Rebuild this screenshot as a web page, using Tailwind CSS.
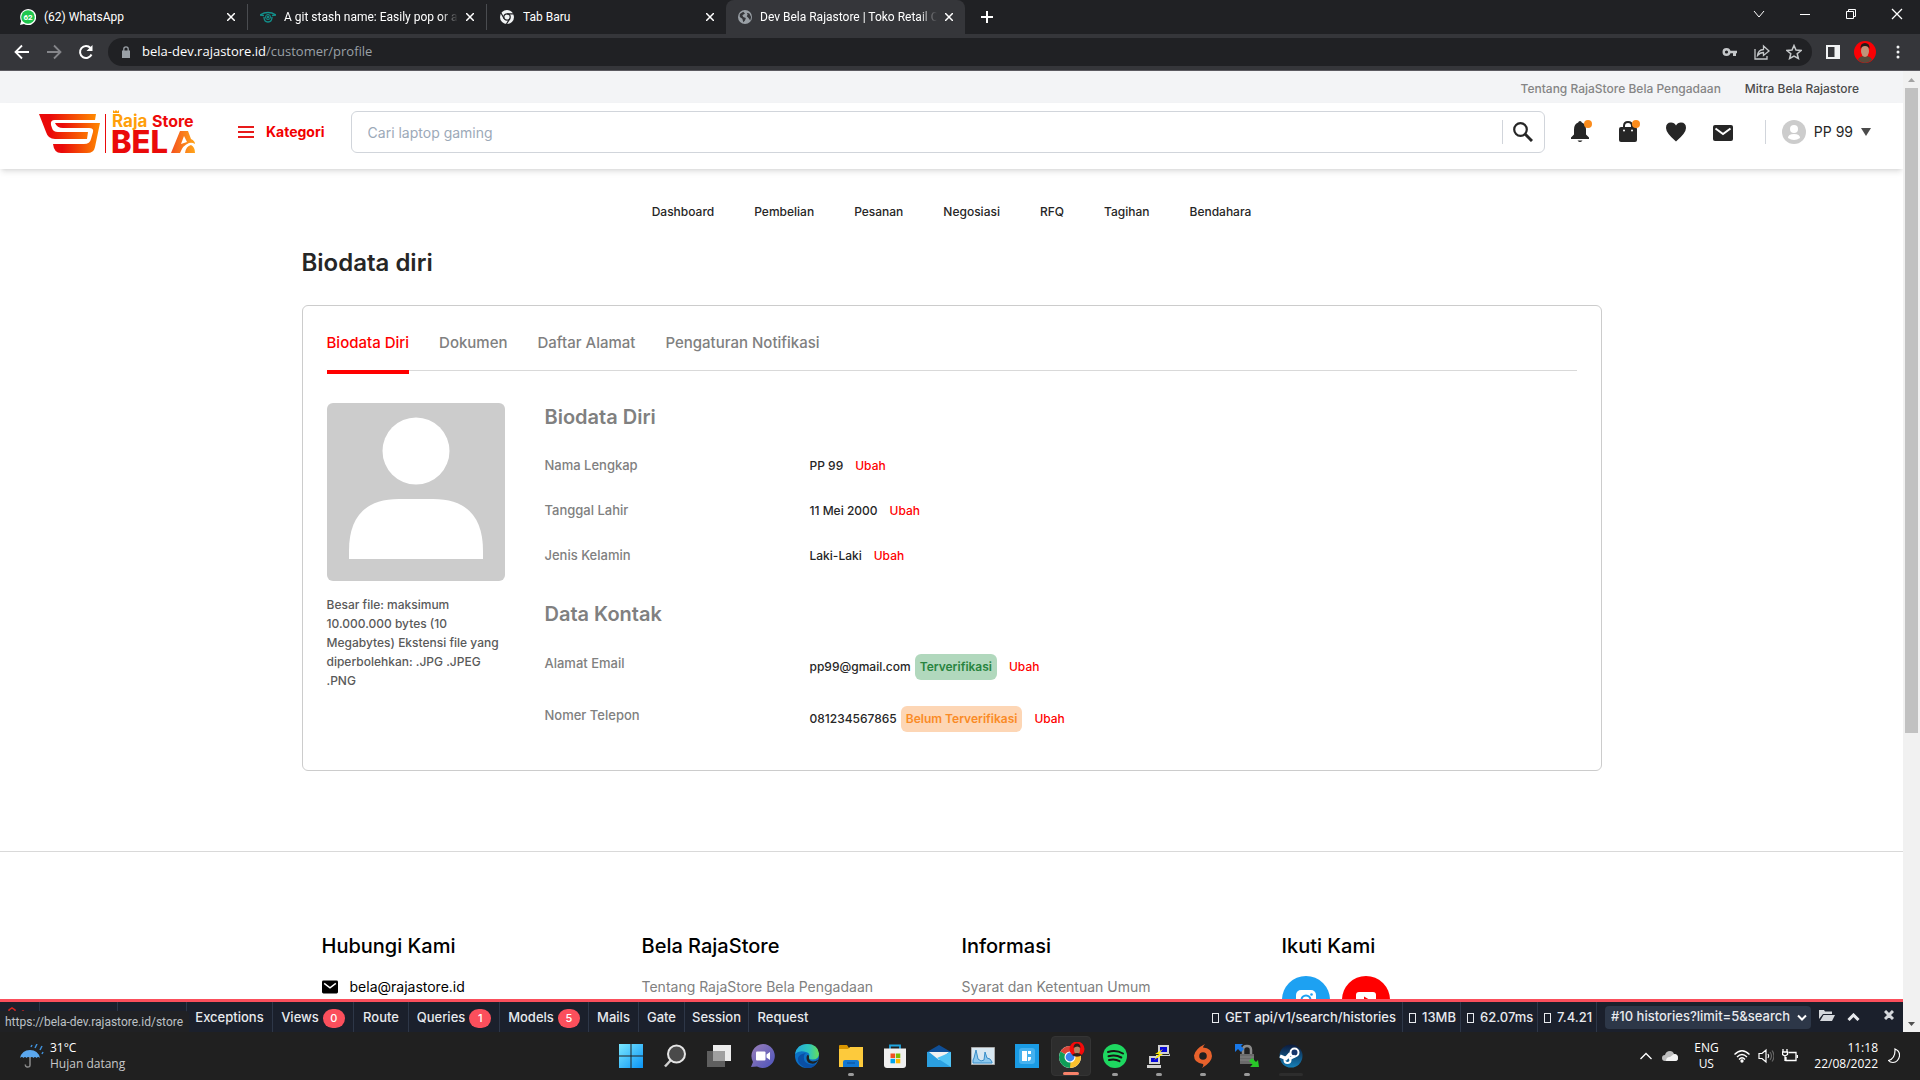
<!DOCTYPE html>
<html lang="id">
<head>
    <meta charset="UTF-8">
    <meta name="viewport" content="width=device-width, initial-scale=1.0">
    <title>Dev Bela Rajastore | Toko Retail Online</title>
    <script src="https://cdn.jsdelivr.net/npm/@tailwindcss/browser@4"></script>
</head>
<body class="h-screen flex flex-col overflow-hidden bg-white font-['Inter','Liberation_Sans',sans-serif] text-[#262626]">

    <!-- Browser: tab -->
    <div class="h-[34px] shrink-0 bg-[#202124] flex items-stretch text-white text-xs font-['Roboto','Open_Sans',sans-serif]">
        <div class="w-[248px] flex items-center pl-5 pr-2 my-1 border-r border-[#4a4c50]">
            <svg class="w-4 h-4 mr-2 shrink-0" viewBox="0 0 16 16"><path d="M0 16l1.200-4A8 8 0 1 1 4 14.900z" fill="#fff"/><circle cx="8" cy="8" r="6.800" fill="#1fc64d"/><text x="8" y="11" font-size="8" font-weight="700" text-anchor="middle" fill="#fff">62</text></svg>
            <span class="flex-1 whitespace-nowrap overflow-hidden">(62) WhatsApp</span>
            <button aria-label="Tutup tab" class="w-4 h-4 flex items-center justify-center"><svg class="w-2 h-2" viewBox="0 0 8 8" stroke="#fff" stroke-width="1.500"><path d="M0 0l8 8M8 0l-8 8"/></svg></button>
        </div>
        <div class="w-[239px] flex items-center pl-3 pr-2 my-1 border-r border-[#4a4c50]">
            <svg class="w-4 h-4 mr-2 shrink-0" viewBox="0 0 16 16" fill="none" stroke="#12918c"><path d="M0 6q8-5 16 0l-4 .5M0 6l4 .5M4 8q0 5 4 5t4-5" stroke-width="1.300"/><circle cx="8" cy="8" r="2.500"/><circle cx="8" cy="8" r="1" fill="#12918c"/></svg>
            <span class="flex-1 whitespace-nowrap overflow-hidden mask-r-from-90%">A git stash name: Easily pop or apply</span>
            <button aria-label="Tutup tab" class="w-4 h-4 ml-1 flex items-center justify-center"><svg class="w-2 h-2" viewBox="0 0 8 8" stroke="#fff" stroke-width="1.500"><path d="M0 0l8 8M8 0l-8 8"/></svg></button>
        </div>
        <div class="w-[239px] flex items-center pl-3 pr-2 my-1">
            <svg class="w-4 h-4 mr-2 shrink-0" viewBox="0 0 16 16"><circle cx="8" cy="8" r="7" fill="#f1f3f4"/><circle cx="8" cy="8" r="3.200" fill="#f1f3f4" stroke="#202124" stroke-width="1.200"/><path d="M8 4.800h7M5.200 9.600L2 4M10.800 9.600L7.500 15" stroke="#202124" stroke-width="1.200"/></svg>
            <span class="flex-1 whitespace-nowrap overflow-hidden">Tab Baru</span>
            <button aria-label="Tutup tab" class="w-4 h-4 flex items-center justify-center"><svg class="w-2 h-2" viewBox="0 0 8 8" stroke="#fff" stroke-width="1.500"><path d="M0 0l8 8M8 0l-8 8"/></svg></button>
        </div>
        <div class="w-[239px] flex items-center pl-3 pr-2 bg-[#35363a] rounded-t-lg">
            <svg class="w-[14px] h-[14px] mr-2 shrink-0" viewBox="0 0 16 16"><circle cx="8" cy="8" r="8" fill="#9aa0a6"/><path d="M2 4.500l4-2.500 2 2-3 2 1 2 3 1-1 3-2 2-1-4-3-2zM10 3l3 1 2 4-1 4-2-3-2-2 1-2z" fill="#35363a"/></svg>
            <span class="flex-1 whitespace-nowrap overflow-hidden mask-r-from-90%">Dev Bela Rajastore | Toko Retail Online</span>
            <button aria-label="Tutup tab" class="w-4 h-4 ml-1 flex items-center justify-center"><svg class="w-2 h-2" viewBox="0 0 8 8" stroke="#fff" stroke-width="1.500"><path d="M0 0l8 8M8 0l-8 8"/></svg></button>
        </div>
        <button aria-label="Tab baru" class="w-11 flex items-center justify-center"><svg class="w-3 h-3" viewBox="0 0 12 12" stroke="#fff" stroke-width="2"><path d="M6 0v12M0 6h12"/></svg></button>
        <div class="ml-auto flex h-7 items-center">
            <button aria-label="Cari tab" class="w-[46px] flex justify-center"><svg class="w-3 h-3" viewBox="0 0 12 12" fill="none" stroke="#fff"><path d="M1 3l5 6 5-6"/></svg></button>
            <button aria-label="Minimalkan" class="w-[46px] flex justify-center"><svg class="w-[10px] h-3" viewBox="0 0 10 12" stroke="#fff"><path d="M0 6.500h10"/></svg></button>
            <button aria-label="Pulihkan" class="w-[46px] flex justify-center"><svg class="w-3 h-3" viewBox="0 0 12 12" fill="none" stroke="#fff"><path d="M1.500 3.500h7v7h-7zM3.500 3.500v-2h7v7h-2"/></svg></button>
            <button aria-label="Tutup" class="w-[46px] flex justify-center"><svg class="w-3 h-3" viewBox="0 0 12 12" stroke="#fff" stroke-width="1.300"><path d="M1 1l10 10M11 1L1 11"/></svg></button>
        </div>
    </div>

    <!-- Browser: toolbar -->
    <div class="h-[37px] shrink-0 bg-[#35363a] border-b border-[#5b5a60] flex items-center pl-[14px] pr-5 font-['Open_Sans','Noto_Sans',sans-serif]">
        <button aria-label="Kembali" class="w-8"><svg class="w-4 h-4" viewBox="0 0 16 16" fill="none" stroke="#fff" stroke-width="1.800"><path d="M15 8H2M8 1.500L1.500 8 8 14.500"/></svg></button>
        <button aria-label="Maju" class="w-8"><svg class="w-4 h-4" viewBox="0 0 16 16" fill="none" stroke="#85868a" stroke-width="1.800"><path d="M1 8h13M8 1.500L14.500 8 8 14.500"/></svg></button>
        <button aria-label="Muat ulang" class="w-[30px]"><svg class="w-4 h-4" viewBox="0 0 16 16" fill="none" stroke="#fff" stroke-width="2"><path d="M13.500 10.500A6 6 0 1 1 12.500 4"/><path d="M14.500 1v6h-6z" fill="#fff" stroke="none"/></svg></button>
        <div class="flex-1 h-7 rounded-full bg-[#202124] flex items-center pl-[14px] pr-[10px]">
            <svg class="w-2 h-3 mr-3" viewBox="0 0 8 12"><path d="M0 4.500h8V12H0z" fill="#9aa0a6"/><path d="M1.800 5V3a2.200 2.200 0 0 1 4.400 0v2" fill="none" stroke="#9aa0a6" stroke-width="1.300"/></svg>
            <span class="flex-1 text-[#9aa0a6] text-[13px]"><span class="text-white">bela-dev.rajastore.id</span>/customer/profile</span>
            <button aria-label="Kata sandi" class="mr-4"><svg class="w-4 h-4" viewBox="0 0 16 16"><circle cx="4.500" cy="8" r="2.800" fill="none" stroke="#c4c7c9" stroke-width="2.400"/><path d="M7 6.800h8v2.500h-1V12h-3V9.300H7z" fill="#c4c7c9"/></svg></button>
            <button aria-label="Bagikan" class="mr-4"><svg class="w-4 h-4" viewBox="0 0 16 16" fill="none" stroke="#c4c7c9" stroke-width="1.300"><path d="M1 5v10h12v-3M3.500 11.500Q4 6 9.500 5.500V2l5.500 5-5.500 4.500V8.500Q6 8.500 3.500 11.500z"/></svg></button>
            <button aria-label="Bookmark"><svg class="w-4 h-4" viewBox="0 0 16 16" fill="none" stroke="#c4c7c9" stroke-width="1.500"><path d="M8 1.500l2 4.500 5 .5-3.800 3.200 1.200 4.800L8 12l-4.400 2.500 1.200-4.800L1 6.500 6 6z"/></svg></button>
        </div>
        <button aria-label="Panel samping" class="ml-[14px] mr-[14px]"><svg class="w-[14px] h-[14px]" viewBox="0 0 14 14"><path d="M0 0h14v14H0z" fill="#f1f3f4"/><path d="M2 2h6.500v10H2z" fill="#35363a"/></svg></button>
        <button aria-label="Profil"><svg class="w-[22px] h-[22px]" viewBox="0 0 22 22"><circle cx="11" cy="11" r="11" fill="#fb0004"/><path d="M4 19q1-4 7-4t7 4q-7 6-14 0" fill="#5a4a3a"/><ellipse cx="11" cy="10" rx="4" ry="6" fill="#c0957a"/><path d="M6.500 8Q6 2 11 2t4.500 6q-1-3-4.500-3t-4.500 3" fill="#231a17"/></svg></button>
        <button aria-label="Menu" class="ml-5"><svg class="w-1 h-[14px]" viewBox="0 0 4 14" fill="#f1f3f4"><circle cx="2" cy="2" r="1.500"/><circle cx="2" cy="7" r="1.500"/><circle cx="2" cy="12" r="1.500"/></svg></button>
    </div>

    <main class="flex-1 min-h-0 flex relative">
        <div class="flex-1 min-w-0 flex flex-col">
            <div class="flex-1 min-h-0 overflow-hidden">
                <div class="h-8 pt-1 bg-[#f3f4f6] flex items-center justify-end gap-6 pr-11 text-xs font-medium">
                    <a href="#" class="text-[#858585]">Tentang RajaStore Bela Pengadaan</a>
                    <a href="#" class="text-[#4b4b4b]">Mitra Bela Rajastore</a>
                </div>

                <header class="h-[66px] bg-white shadow-md flex items-center pl-[39px] pr-8 pb-2">
                    <a href="#" aria-label="RajaStore Bela" class="mr-[43px]">
                        <svg class="w-[156px] h-11 overflow-visible" viewBox="0 0 156 44">
                            <defs><linearGradient id="cart" x1="0" x2="1"><stop offset=".2" stop-color="#ea0a0a"/><stop offset="1" stop-color="#ff8a00"/></linearGradient>
                            <linearGradient id="huruf" x1="0" x2="1"><stop offset="0" stop-color="#f4511e"/><stop offset="1" stop-color="#ffa51a"/></linearGradient></defs>
                            <path d="M0 4h57l-1 6H16q-5 0-4 5l1 3q1 4 6 4h30l-1 7H16q-7 0-9-7z" fill="url(#cart)"/>
                            <path d="M61 13l-5 24q-1 6-8 6H22q-7 0-8-9h31q6 0 7-5l2-7q1-4-4-4H24q-6 0-8-5z" fill="url(#cart)"/>
                            <path d="M66.500 4v39" stroke="#ea0a0a"/>
                            <text x="73" y="17" font-size="17" font-weight="700" fill="#ff9f0a">Raja</text>
                            <path d="M74 0l1.500 1.500L77 0l1.500 1.500L80 0v3h-6z" fill="#ff9f0a"/>
                            <text x="113" y="17" font-size="16" font-weight="700" fill="#ee0909">Store</text>
                            <text x="72" y="43" font-size="31" font-weight="800" fill="#ea0a0a">BEL</text>
                            <path d="M132 43l9-22h8l3 8q4 2 4 5-3-2-6-1-6 2-9 10h-7zM146 43q1-7 6-8 4 2 4 8z" fill="url(#huruf)"/>
                            <path d="M145 26l-3 8 6-2z" fill="#fff"/>
                        </svg>
                    </a>
                    <button class="flex items-center gap-3 text-[#f20000] text-sm font-bold mr-[26px]">
                        <svg class="w-4 h-3" viewBox="0 0 16 12" fill="#e81a1a"><path d="M0 0h16v2H0zM0 5h16v2H0zM0 10h16v2H0z"/></svg>
                        Kategori
                    </button>
                    <form class="flex-1 h-[42px] border border-[#d1d5db] rounded-md flex items-center">
                        <input type="text" aria-label="Cari" placeholder="Cari laptop gaming" class="flex-1 h-full px-4 text-sm outline-none placeholder:text-[#9ca9b8]">
                        <button type="button" aria-label="Cari" class="w-[42px] h-6 border-l border-[#d1d5db] flex items-center justify-center"><svg class="w-5 h-5" viewBox="0 0 20 20" fill="none" stroke="#262626"><circle cx="7.500" cy="7.500" r="6.300" stroke-width="2.200"/><path d="M12 12l7 7" stroke-width="3"/></svg></button>
                    </form>
                    <div class="flex items-center gap-[26px] ml-6 mr-8 text-[#262626]">
                        <a href="#" aria-label="Notifikasi" class="relative"><svg class="w-[22px] h-[22px]" viewBox="0 0 22 22" fill="currentColor"><path d="M11 0q1.500 0 1.800 1.500Q17 3 17 8.500v5l3 3V18H2v-1.500l3-3v-5Q5 3 9.200 1.500 9.500 0 11 0zM8.500 19.500h5q-2.500 3-5 0z"/></svg><span class="absolute -top-px -right-px w-2 h-2 rounded-full bg-[#fb8c1c]"></span></a>
                        <a href="#" aria-label="Keranjang" class="relative"><svg class="w-[22px] h-[22px]" viewBox="0 0 22 22"><path d="M4 6h14q2 0 2 2v11q0 2-2 2H4q-2 0-2-2V8q0-2 2-2z" fill="#262626"/><path d="M7 8V5q0-4 4-4t4 4v3" fill="none" stroke="#262626" stroke-width="2"/><circle cx="7" cy="9.500" r="1" fill="#fff"/><circle cx="15" cy="9.500" r="1" fill="#fff"/></svg><span class="absolute -top-px -right-px w-2 h-2 rounded-full bg-[#fb8c1c]"></span></a>
                        <a href="#" aria-label="Favorit"><svg class="w-[22px] h-[22px]" viewBox="0 0 22 22" fill="currentColor"><path d="M11 20.500Q1 12 1 7q0-5.500 5-5.500 3.500 0 5 3 1.500-3 5-3 5 0 5 5.500 0 5-10 13.500z"/></svg></a>
                        <a href="#" aria-label="Pesan"><svg class="w-5 h-[22px]" viewBox="0 0 20 22"><rect x="0" y="4" width="20" height="16" rx="2" fill="#262626"/><path d="M2.500 7.500L10 13l7.500-5.500" fill="none" stroke="#fff" stroke-width="2"/></svg></a>
                    </div>
                    <button class="h-6 border-l border-[#d1d5db] pl-4 flex items-center text-sm">
                        <svg class="w-6 h-6 mr-2" viewBox="0 0 24 24"><circle cx="12" cy="12" r="12" fill="#ccc"/><circle cx="12" cy="9" r="4" fill="#fff"/><path d="M6 18q0-4 6-4t6 4q-6 4-12 0z" fill="#fff"/></svg>
                        PP 99
                        <svg class="w-[10px] h-2 ml-2" viewBox="0 0 10 8"><path d="M0 0h10L5 8z" fill="#4b4b4b"/></svg>
                    </button>
                </header>

                <nav class="mt-[34px] flex justify-center gap-10 text-xs leading-[18px] font-medium">
                    <a href="#">Dashboard</a>
                    <a href="#">Pembelian</a>
                    <a href="#">Pesanan</a>
                    <a href="#">Negosiasi</a>
                    <a href="#">RFQ</a>
                    <a href="#">Tagihan</a>
                    <a href="#">Bendahara</a>
                </nav>

                <div class="max-w-[1300px] mx-auto">
                    <h1 class="mt-[26px] text-2xl leading-8 font-semibold">Biodata diri</h1>

                    <section class="mt-[26px] border border-[#ccc] rounded-md px-6 h-[466px]">
                        <div class="flex gap-[30px] border-b border-[#d9d9d9] text-[15px] leading-4 font-medium text-[#808080]">
                            <a href="#" class="pt-[29px] pb-[19px] -mb-1 border-b-4 border-[#f00] text-[#f00]">Biodata Diri</a>
                            <a href="#" class="pt-[29px]">Dokumen</a>
                            <a href="#" class="pt-[29px]">Daftar Alamat</a>
                            <a href="#" class="pt-[29px]">Pengaturan Notifikasi</a>
                        </div>

                        <div class="mt-8 flex">
                            <div class="w-[178px] mr-10">
                                <svg class="w-[178px] h-[178px] rounded-md bg-[#ccc]" viewBox="0 0 178 178" fill="#fff"><circle cx="89" cy="48" r="33.500"/><path d="M22 156v-8q0-52 50-52h34q50 0 50 52v8z"/></svg>
                                <p class="mt-[14px] text-xs leading-[19px] font-medium text-[#5a5a5a]">Besar file: maksimum 10.000.000 bytes (10 Megabytes) Ekstensi file yang diperbolehkan: .JPG .JPEG .PNG</p>
                            </div>

                            <div class="flex-1 text-xs font-medium">
                                <h2 class="text-xl leading-7 font-semibold text-[#808080]">Biodata Diri</h2>
                                <dl class="mt-[26px] grid grid-cols-[265px_1fr] gap-y-7 leading-[17px]">
                                    <dt class="text-[13px] text-[#808080]">Nama Lengkap</dt>
                                    <dd class="flex gap-3">PP 99 <a href="#" class="text-[#f00]">Ubah</a></dd>
                                    <dt class="text-[13px] text-[#808080]">Tanggal Lahir</dt>
                                    <dd class="flex gap-3">11 Mei 2000 <a href="#" class="text-[#f00]">Ubah</a></dd>
                                    <dt class="text-[13px] text-[#808080]">Jenis Kelamin</dt>
                                    <dd class="flex gap-3">Laki-Laki <a href="#" class="text-[#f00]">Ubah</a></dd>
                                </dl>

                                <h2 class="mt-9 text-xl leading-7 font-semibold text-[#808080]">Data Kontak</h2>
                                <dl class="mt-[26px] grid grid-cols-[265px_1fr] gap-y-[26px] leading-[18px]">
                                    <dt class="text-[13px] text-[#808080]">Alamat Email</dt>
                                    <dd class="flex items-center">pp99@gmail.com <span class="ml-1 px-[5px] py-1 rounded-md bg-[#b1d8bd] text-[#28843f] font-semibold">Terverifikasi</span> <a href="#" class="ml-3 text-[#f00]">Ubah</a></dd>
                                    <dt class="text-[13px] text-[#808080]">Nomer Telepon</dt>
                                    <dd class="flex items-center">081234567865 <span class="ml-1 px-[5px] py-1 rounded-md bg-[#fdd6b5] text-[#fa8b26] font-semibold">Belum Terverifikasi</span> <a href="#" class="ml-3 text-[#f00]">Ubah</a></dd>
                                </dl>
                            </div>
                        </div>
                    </section>
                </div>

                <footer class="mt-20 border-t border-[#d9d9d9] pt-20">
                    <div class="max-w-[1260px] mx-auto grid grid-cols-[320px_320px_320px_1fr] text-sm text-[#808080]">
                        <div>
                            <h3 class="text-xl leading-7 font-medium text-black">Hubungi Kami</h3>
                            <a href="#" class="mt-[15px] h-6 flex items-center gap-3 text-black"><svg class="w-4 h-4" viewBox="0 0 22 22"><rect x="0" y="2" width="22" height="18" rx="2"/><path d="M3 6l8 6 8-6" fill="none" stroke="#fff" stroke-width="2"/></svg>bela@rajastore.id</a>
                        </div>
                        <div>
                            <h3 class="text-xl leading-7 font-medium text-black">Bela RajaStore</h3>
                            <a href="#" class="mt-[15px] h-6 flex items-center">Tentang RajaStore Bela Pengadaan</a>
                        </div>
                        <div>
                            <h3 class="text-xl leading-7 font-medium text-black">Informasi</h3>
                            <a href="#" class="mt-[15px] h-6 flex items-center">Syarat dan Ketentuan Umum</a>
                        </div>
                        <div>
                            <h3 class="text-xl leading-7 font-medium text-black">Ikuti Kami</h3>
                            <div class="mt-4 flex gap-3">
                                <a href="#" aria-label="Instagram" class="w-12 h-12 rounded-full bg-[#1da1f2] flex items-center justify-center"><svg class="w-5 h-5" viewBox="0 0 20 20"><rect width="20" height="20" rx="5" fill="#fff"/><circle cx="10" cy="10" r="4.500" fill="none" stroke="#1da1f2" stroke-width="2"/><circle cx="15.500" cy="4.500" r="1.300" fill="#1da1f2"/></svg></a>
                                <a href="#" aria-label="YouTube" class="w-12 h-12 rounded-full bg-[#f00] flex items-center justify-center"><svg class="w-5 h-4" viewBox="0 0 20 16"><rect width="20" height="16" rx="3" fill="#fff"/><path d="M8 4.500l6 3.500-6 3.500z" fill="#f00"/></svg></a>
                            </div>
                        </div>
                    </div>
                </footer>
            </div>

            <!-- Debugbar -->
            <div class="h-[33px] shrink-0 border-t-3 border-[#fb4f5c] bg-[#1b202c] flex items-stretch text-[13px] font-medium text-[#e8eaee]">
                <div class="w-10 border-r border-[#2e3748] pl-2 pt-1"><svg class="w-5 h-5" viewBox="0 0 20 20" fill="none" stroke="#d0261f" stroke-width="1.500"><path d="M1 6V4l3-2 3 2v6l5 3V7l3-2 3 2v4l-6 4"/></svg></div>
                <div class="w-[78px] border-r border-[#2e3748]"></div>
                <div class="w-[69px] border-r border-[#2e3748]"></div>
                <button class="w-[86px] border-r border-[#2e3748] pt-[2px]">Exceptions</button>
                <button class="w-[81px] border-r border-[#2e3748] pt-[2px] flex items-center justify-center gap-1">Views <span class="w-[22px] h-[19px] rounded-full bg-[#fb4f5c] text-white text-[11px] leading-[19px]">0</span></button>
                <button class="w-[55px] border-r border-[#2e3748] pt-[2px]">Route</button>
                <button class="w-[91px] border-r border-[#2e3748] pt-[2px] flex items-center justify-center gap-1">Queries <span class="w-[22px] h-[19px] rounded-full bg-[#fb4f5c] text-white text-[11px] leading-[19px]">1</span></button>
                <button class="w-[89px] border-r border-[#2e3748] pt-[2px] flex items-center justify-center gap-1">Models <span class="w-[22px] h-[19px] rounded-full bg-[#fb4f5c] text-white text-[11px] leading-[19px]">5</span></button>
                <button class="w-[50px] border-r border-[#2e3748] pt-[2px]">Mails</button>
                <button class="w-[46px] border-r border-[#2e3748] pt-[2px]">Gate</button>
                <button class="w-[64px] border-r border-[#2e3748] pt-[2px]">Session</button>
                <button class="w-[68px] pt-[2px]">Request</button>
                <div class="ml-auto flex items-stretch">
                    <span class="flex items-center gap-[6px] px-[6px] pt-[2px] border-r border-[#2e3748]"><i class="w-[7px] h-[10px] border border-current"></i>GET api/v1/search/histories</span>
                    <span class="w-[58px] flex items-center gap-[6px] pl-[6px] pt-[2px] border-r border-[#2e3748]"><i class="w-[7px] h-[10px] border border-current"></i>13MB</span>
                    <span class="w-[77px] flex items-center gap-[6px] pl-[6px] pt-[2px] border-r border-[#2e3748]"><i class="w-[7px] h-[10px] border border-current"></i>62.07ms</span>
                    <span class="w-[59px] flex items-center gap-[6px] pl-[6px] pt-[2px] border-r border-[#2e3748]"><i class="w-[7px] h-[10px] border border-current"></i>7.4.21</span>
                    <div class="relative self-center ml-2">
                        <select aria-label="Riwayat permintaan" class="appearance-none w-[206px] h-[23px] rounded-sm bg-[#2d3748] pl-[6px] pr-4 outline-none"><option>#10 histories?limit=5&amp;search</option></select>
                        <svg class="absolute right-1 top-2 w-[10px] h-2" viewBox="0 0 10 8" fill="none" stroke="#fff" stroke-width="2"><path d="M1 1.500l4 4 4-4"/></svg>
                    </div>
                    <button aria-label="Buka" class="ml-2 mb-1"><svg class="w-4 h-3" viewBox="0 0 16 12" fill="#d5d8dc"><path d="M0 10V1h5l1 1.500h7V5H4zM1 12l3.500-6H16l-3 6z"/></svg></button>
                    <button aria-label="Perkecil" class="ml-3"><svg class="w-[13px] h-2" viewBox="0 0 13 8" fill="none" stroke="#e8eaee" stroke-width="3"><path d="M1.500 7l5-5 5 5"/></svg></button>
                    <button aria-label="Tutup debugbar" class="ml-6 mr-[9px] mb-1"><svg class="w-[10px] h-[10px]" viewBox="0 0 10 10" stroke="#d5d8dc" stroke-width="3"><path d="M1 1l8 8M9 1L1 9"/></svg></button>
                </div>
            </div>
        </div>

        <!-- Scrollbar -->
        <div class="w-[17px] bg-[#f1f1f1] flex flex-col items-center">
            <svg class="w-[17px] h-[17px] shrink-0" viewBox="0 0 17 17"><path d="M5 11h7L8.500 7z" fill="#a3a3a3"/></svg>
            <div class="w-[13px] h-[645px] bg-[#c1c1c1]"></div>
            <svg class="w-[17px] h-[17px] shrink-0 mt-auto" viewBox="0 0 17 17"><path d="M5 7h7l-3.500 4z" fill="#505050"/></svg>
        </div>

        <!-- Status URL -->
        <div class="absolute left-0 bottom-0 h-[21px] pl-[5px] pr-[6px] rounded-tr-sm bg-[#202124] text-xs leading-[22px] text-[#bdc1c6] font-['Roboto','Open_Sans',sans-serif]">https://bela-dev.rajastore.id/store</div>
    </main>

    <!-- Taskbar -->
    <div class="h-12 shrink-0 bg-[#202020] grid grid-cols-[1fr_auto_1fr] items-center text-white text-xs leading-4 font-['Open_Sans','Noto_Sans',sans-serif]">
        <button class="pl-5 flex items-center gap-[6px] text-left">
            <svg class="w-6 h-6" viewBox="0 0 24 24"><path d="M0 14Q2 6 10 6t10 8q-2-2-3.500 0-1.500-2-3 0-1.500-2-3.500 0-2-2-3.500 0Q5 12 3.500 14 2 12 0 14z" fill="#5aa7ee"/><path d="M10 13v8q0 2.500-3 2-2-.5-1.500-2.500" fill="none" stroke="#8a8a8a" stroke-width="1.500"/><path d="M12 1l-1 2M17 0l-2 4M22 2l-2 4M23 8l-1 2" stroke="#3f8fd8" stroke-width="1.500"/></svg>
            <span>31°C<br><span class="text-[#c8c8c8]">Hujan datang</span></span>
        </button>
        <div class="flex items-center h-12 pl-[2px]">
            <button aria-label="Mulai" class="w-11 flex justify-center"><svg class="w-6 h-6" viewBox="0 0 24 24"><defs><linearGradient id="win" x1="0" y1="0" x2="1" y2="1"><stop stop-color="#7be8ff"/><stop offset="1" stop-color="#0a94f5"/></linearGradient></defs><path d="M0 0h11.500v11.500H0zM12.500 0H24v11.500H12.500zM0 12.500h11.500V24H0zM12.500 12.500H24V24H12.500z" fill="url(#win)"/></svg></button>
            <button aria-label="Cari" class="w-11 flex justify-center"><svg class="w-6 h-6" viewBox="0 0 24 24"><path d="M8 16l-6 6.500" stroke="#cfcfcf" stroke-width="2.500"/><circle cx="13.500" cy="10" r="8.500" fill="#4a4a4a" stroke="#e4e4e4" stroke-width="2"/></svg></button>
            <button aria-label="Tampilan tugas" class="w-11 flex justify-center"><svg class="w-6 h-6" viewBox="0 0 24 24"><path d="M6 1h18v16H6z" fill="#ececec"/><path d="M0 7h18v16H0z" fill="#6b6b6b" opacity=".85"/><path d="M6 7h12v10H6z" fill="#a0a0a0"/></svg></button>
            <button aria-label="Chat" class="w-11 flex justify-center"><svg class="w-6 h-6" viewBox="0 0 24 24"><defs><linearGradient id="chat" x1="0" y1="0" x2="1" y2="1"><stop stop-color="#9b7fb8"/><stop offset="1" stop-color="#4b53bc"/></linearGradient></defs><path d="M12 0a12 12 0 1 1-6 22.500L0 23l2-5A12 12 0 0 1 12 0z" fill="url(#chat)"/><rect x="5" y="7.500" width="9.500" height="9" rx="1" fill="#fff"/><path d="M15.500 10.500L19 8v8l-3.500-2.500z" fill="#fff"/></svg></button>
            <button aria-label="Edge" class="w-11 flex justify-center"><svg class="w-6 h-6" viewBox="0 0 24 24"><defs><linearGradient id="edge"><stop stop-color="#23a8e0"/><stop offset=".6" stop-color="#30c8b8"/><stop offset="1" stop-color="#68dd58"/></linearGradient></defs><circle cx="12" cy="12" r="12" fill="#0c70c4"/><path d="M0 10Q2 0 12 0q11 0 12 9.500 0 6-6.500 6-4 0-3.500-2.500 1.500-4-3-5Q4 6 0 10z" fill="url(#edge)"/><path d="M9 12q-1 6 5 8 4 1.500 8-1-4 6-11 5Q2 21 3 14q1-4 8-5-2 1-2 3z" fill="#0a4fa5"/><path d="M14 13q-.5 4 4 4.500 3 0 5.500-2-1.500 3-4 4-8 1-8-5.500 0-2 1-3 2 0 1.500 2z" fill="#202020"/></svg></button>
            <button aria-label="File Explorer" class="w-11 flex justify-center relative"><svg class="w-6 h-6" viewBox="0 0 24 24"><path d="M0 2q0-1 1-1h7l2 3v4H0z" fill="#d99500"/><path d="M0 5h9l2-2h13v20H0z" fill="#fdca3c"/><path d="M4 23v-5q0-2 2-2h12q2 0 2 2v5z" fill="#1277d3"/><path d="M8 19h8" stroke="#0b4d96"/></svg><span class="absolute -bottom-2 w-[6px] h-[3px] rounded-full bg-[#9a9a9a]"></span></button>
            <button aria-label="Microsoft Store" class="w-11 flex justify-center"><svg class="w-6 h-6" viewBox="0 0 24 24"><path d="M7 5V1.500h10V5" fill="none" stroke="#1fa5e0" stroke-width="1.800"/><path d="M1 4.500h22V21q0 3-3 3H4q-3 0-3-3z" fill="#f0f0f0"/><path d="M7.500 9.500H12V14H7.500z" fill="#f25022"/><path d="M12.800 9.500h4.500V14h-4.500z" fill="#7fba00"/><path d="M7.500 14.800H12v4.500H7.500z" fill="#00a4ef"/><path d="M12.800 14.800h4.500v4.500h-4.500z" fill="#ffb900"/></svg></button>
            <button aria-label="Mail" class="w-11 flex justify-center"><svg class="w-6 h-6" viewBox="0 0 24 24"><path d="M0 8l12-7 12 7z" fill="#0f4f97"/><path d="M0 8h24v15H0z" fill="#2b9fe0"/><path d="M2 8h20l-10 8z" fill="#f2f2f2"/><path d="M24 8v15L10 14z" fill="#50c3f5"/></svg></button>
            <button aria-label="Monitor" class="w-11 flex justify-center"><svg class="w-6 h-6" viewBox="0 0 24 24"><path d="M.5 3.500h23v17H.5z" fill="#d8e8f2" stroke="#aaa"/><path d="M2 16l1-2 2-8 2 9 3 2 3-1 1-8 2 6 3 1 2 3v1H2z" fill="#8cc8ee" stroke="#3a8ec8"/></svg></button>
            <button aria-label="Aplikasi" class="w-11 flex justify-center"><svg class="w-6 h-6" viewBox="0 0 24 24"><path d="M0 0h24v24H0z" fill="#1a9be4"/><rect x="4" y="4" width="16" height="16" rx="3" fill="#45b1ef"/><path d="M7 7h5v10H7zM13 7h3v3h-3zM13 13h3v1q0 3-3 3z" fill="#fff"/></svg></button>
            <button aria-label="Chrome" class="w-11 flex justify-center relative"><span class="w-10 h-10 rounded border border-[#343434] bg-[#2d2d2d] flex items-center justify-center"><svg class="w-7 h-7" viewBox="0 0 28 28"><circle cx="13" cy="15" r="11" fill="#fff"/><path d="M13 15L3.500 9.500A11 11 0 0 1 22.500 9.500z" fill="#db4437"/><path d="M13 15L3.500 9.500A11 11 0 0 0 13 26l4-7z" fill="#0f9d58"/><path d="M14 14L22.500 9.500A11 11 0 0 1 13 26z" fill="#fbc02d"/><circle cx="13" cy="15" r="5.500" fill="#fff"/><circle cx="13" cy="15" r="4.400" fill="#3b82f0"/><circle cx="20" cy="7" r="7.500" fill="#f50a0a"/><ellipse cx="20" cy="7.500" rx="3" ry="4.500" fill="#b08565"/><path d="M16.500 6q0-4.500 3.500-4.500T23.500 6q-3-3-7 0M15 13q5-4 10 0-5 3-10 0" fill="#2b211c"/></svg></span><span class="absolute bottom-px w-4 h-[3px] rounded-full bg-[#f8826a]"></span></button>
            <button aria-label="Spotify" class="w-11 flex justify-center relative"><svg class="w-6 h-6" viewBox="0 0 24 24"><circle cx="12" cy="12" r="12" fill="#1ed760"/><path d="M5 8q8-2.500 15 1.500M5.500 12.300q7-2 12.800 1.200M6 16q6-1.500 10.500 1.200" fill="none" stroke="#191414" stroke-width="2" stroke-linecap="round"/></svg><span class="absolute -bottom-2 w-[6px] h-[3px] rounded-full bg-[#9a9a9a]"></span></button>
            <button aria-label="PuTTY" class="w-11 flex justify-center relative"><svg class="w-6 h-6" viewBox="0 0 24 24"><path d="M11 1h11v9H11zM9 11h13l1-2v3H9zM2 12h11v8H2zM0 21h14v3H0z" fill="#d0d0d0"/><path d="M13 3h7v5h-7zM4 14h7v4H4z" fill="#0606d8"/><path d="M16 5l-8 5h4l-5 6 9-6h-4z" fill="#ffee00"/></svg><span class="absolute -bottom-2 w-[6px] h-[3px] rounded-full bg-[#9a9a9a]"></span></button>
            <button aria-label="Origin" class="w-11 flex justify-center relative"><svg class="w-6 h-6" viewBox="0 0 24 24"><path d="M14 0q-2 2-2 3.500Q21 4 21 12q0 6-10 12 2-3 1-4-9-1-9-8.500Q4 5 14 0z" fill="#e8622c"/><circle cx="12" cy="12" r="3.800" fill="#202020"/></svg><span class="absolute -bottom-2 w-[6px] h-[3px] rounded-full bg-[#9a9a9a]"></span></button>
            <button aria-label="WinSCP" class="w-11 flex justify-center relative"><svg class="w-6 h-6" viewBox="0 0 24 24"><path d="M8 11V6q0-4 4-4t4 4v5" fill="none" stroke="#8a8a8a" stroke-width="2.500"/><path d="M5 10h14v10H5z" fill="#6a6a6a"/><path d="M5 13h14M5 16h14" stroke="#858585"/><path d="M0 0h8L6 2l3 3-3 3-3-3-3 3z" fill="#1878e8"/><path d="M24 23h-9l2.500-2.500L14 17l3-3 4 4 2-2z" fill="#28c828"/></svg><span class="absolute -bottom-2 w-[6px] h-[3px] rounded-full bg-[#9a9a9a]"></span></button>
            <button aria-label="Steam" class="w-11 flex justify-center relative"><svg class="w-6 h-6" viewBox="0 0 24 24"><defs><linearGradient id="steam" x1="0" y1="0" x2="0" y2="1"><stop stop-color="#0c1a3c"/><stop offset="1" stop-color="#1580b8"/></linearGradient></defs><circle cx="12" cy="12" r="11.500" fill="url(#steam)"/><path d="M1 12l6 2.500 4.500-5" fill="none" stroke="#fff" stroke-width="3.500"/><circle cx="15.500" cy="8.500" r="4" fill="#15356a" stroke="#fff" stroke-width="2"/><circle cx="8.500" cy="16" r="3" fill="none" stroke="#fff" stroke-width="2"/><path d="M10 15l6-3" stroke="#fff" stroke-width="3"/></svg><span class="absolute -bottom-2 w-6 h-[3px] rounded-full bg-[#2d2d2d]"></span></button>
        </div>
        <div class="flex items-center justify-end pr-5">
            <svg class="w-3 h-3 mr-[10px]" viewBox="0 0 12 12" fill="none" stroke="#fff" stroke-width="1.300"><path d="M.5 9L6 3.500 11.500 9"/></svg>
            <svg class="w-4 h-3 mr-4" viewBox="0 0 16 12"><path d="M3 11Q0 11 0 8t3-3q1-4 5-4 3 0 4 3 4 0 4 4 0 3-3 3z" fill="#bdbdbd"/><path d="M4 11q0-4 4-4l4-3q4 0 4 4 0 3-3 3z" fill="#f4f4f4"/></svg>
            <span class="w-6 mr-4 text-center">ENG<br>US</span>
            <svg class="w-4 h-4 mr-2" viewBox="0 0 16 16" fill="none" stroke="#fff" stroke-width="1.300"><path d="M.5 6.500Q8-1 15.500 6.500M3 9q5-5 10 0M5 11.500q3-3.500 6 0"/><circle cx="8" cy="13" r="1" fill="#fff"/></svg>
            <svg class="w-4 h-4 mr-2" viewBox="0 0 16 16" fill="none" stroke="#fff" stroke-width="1.200"><path d="M1 5.500h3L8 2v12l-4-3.500H1zM10 6q1.500 2 0 4"/><path d="M12 4q3 4 0 8M14 2.500q4 5.500 0 11" stroke="#666"/></svg>
            <svg class="w-4 h-4 mr-4" viewBox="0 0 16 16" fill="none" stroke="#fff" stroke-width="1.300"><path d="M6.500 4.500H14v8H4V9M15.500 7v3M1 1v3M5 1v3M.5 4h5v2.500L3 8 .5 6.500zM3 8v5"/></svg>
            <span class="text-right">11:18<br>22/08/2022</span>
            <svg class="w-3 h-4 ml-[10px]" viewBox="0 0 12 16" fill="none" stroke="#fff" stroke-width="1.200"><path d="M7 1q5 2 4.500 7-1 6-6.500 6.500-3 0-4.500-2 7-2 6.500-11.500z"/></svg>
        </div>
    </div>
</body>
</html>
